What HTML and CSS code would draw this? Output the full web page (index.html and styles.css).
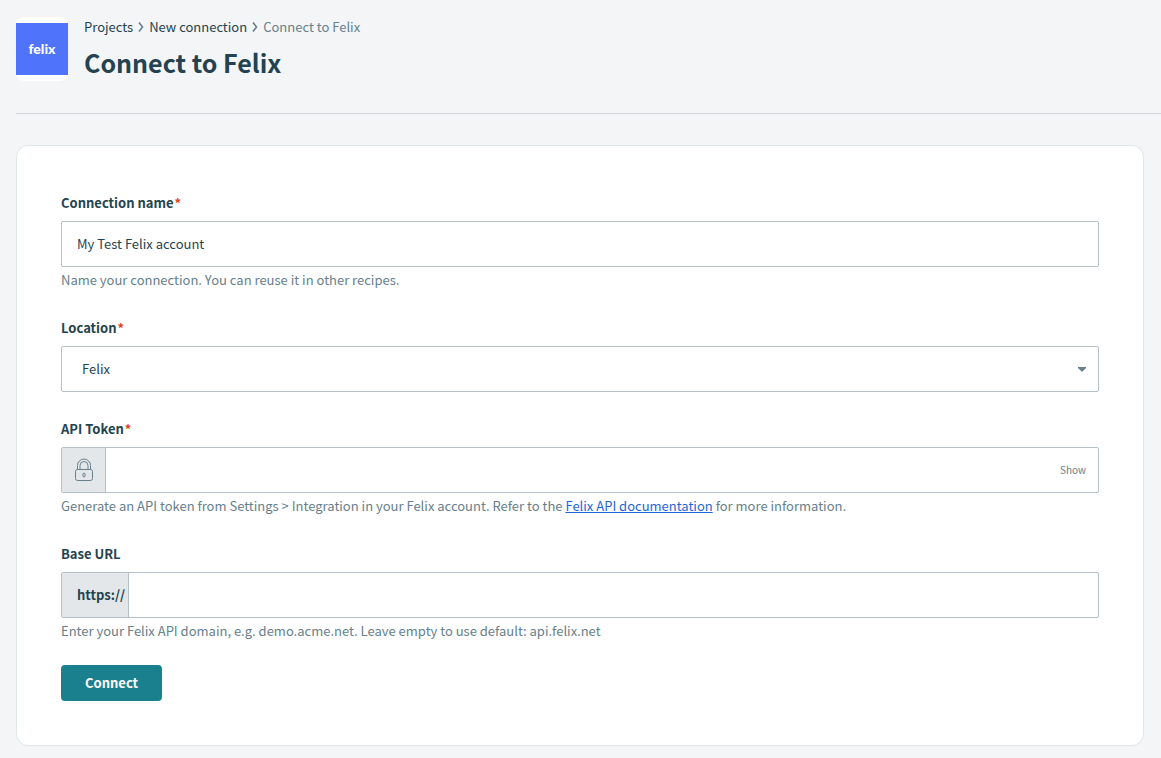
FILE: index.html
```
<!DOCTYPE html>
<html lang="en">
<head>
<meta charset="utf-8">
<meta name="viewport" content="width=device-width, initial-scale=1">
<title>Connect to Felix</title>
<link rel="stylesheet" href="styles.css">
</head>
<body>
<header class="page-header">
  <div class="app-logo"><span class="app-logo-mark">felix</span></div>
  <div class="page-heading">
    <nav class="breadcrumbs" aria-label="Breadcrumb">
      <a class="crumb" href="#projects">Projects</a>
      <svg class="crumb-arrow" viewBox="0 0 6 10" aria-hidden="true"><path d="M1 .5 4.500 5 1 9.500"/></svg>
      <a class="crumb" href="#new">New connection</a>
      <svg class="crumb-arrow" viewBox="0 0 6 10" aria-hidden="true"><path d="M1 .5 4.500 5 1 9.500"/></svg>
      <span class="crumb crumb-current" aria-current="page">Connect to Felix</span>
    </nav>
    <h1 class="page-title">Connect to Felix</h1>
  </div>
</header>
<main class="card">
  <form class="form">
    <div class="field">
      <label class="label" for="name">Connection name<span class="required">*</span></label>
      <div class="control"><input class="input" id="name" type="text" value="My Test Felix account"></div>
      <p class="hint">Name your connection. You can reuse it in other recipes.</p>
    </div>
    <div class="field">
      <label class="label" for="location">Location<span class="required">*</span></label>
      <div class="control">
        <select class="input select" id="location"><option>Felix</option></select>
        <svg class="caret" viewBox="0 0 8 5" aria-hidden="true"><path d="M0 0h8v1L4.500 4.500h-1L0 1z"/></svg>
      </div>
    </div>
    <div class="field">
      <label class="label" for="token">API Token<span class="required">*</span></label>
      <div class="control">
        <span class="addon addon-icon">
          <svg class="lock" viewBox="0 0 20 24" aria-hidden="true">
            <path d="M3.500 11V7.500a6.500 6.500 0 0 1 13 0V11M6 11V7.500a4 4 0 0 1 8 0V11"/>
            <rect x="1.500" y="11.500" width="17" height="11" rx="2"/>
            <ellipse cx="10" cy="17" rx="1.200" ry="2"/>
          </svg>
        </span>
        <input class="input" id="token" type="password">
        <button class="show" type="button">Show</button>
      </div>
      <p class="hint">Generate an API token from Settings &gt; Integration in your Felix account. Refer to the <a class="link" href="#docs">Felix API documentation</a> for more information.</p>
    </div>
    <div class="field">
      <label class="label" for="url">Base URL</label>
      <div class="control">
        <span class="addon addon-text">https://</span>
        <input class="input" id="url" type="text">
      </div>
      <p class="hint">Enter your Felix API domain, e.g. demo.acme.net. Leave empty to use default: api.felix.net</p>
    </div>
    <button class="submit" type="submit">Connect</button>
  </form>
</main>
</body>
</html>
```
FILE: styles.css
```
* { box-sizing: border-box; }

body {
  margin: 0;
  background: #f3f5f7;
  color: #24434f;
  font: 13px/20px "Source Sans Pro", "Noto Sans CJK SC", sans-serif;
}

.page-header {
  display: flex;
  gap: 16px;
  margin-left: 16px;
  padding: 17px 0 32px;
  border-bottom: 1px solid #cdd3d6;
}

.app-logo {
  display: flex;
  align-items: center;
  width: 52px;
  height: 64px;
  border-radius: 8px;
  background: #fff;
}

.app-logo-mark {
  width: 52px;
  height: 52px;
  background: #5073fb;
  color: #fff;
  font: 900 14px/52px Lato, sans-serif;
  text-align: center;
}

.breadcrumbs { display: flex; align-items: center; gap: 5px; }
.crumb { color: #24434f; text-decoration: none; }
.crumb-current { color: #67808b; }
.crumb-arrow { width: 6px; height: 10px; fill: none; stroke: #67808b; stroke-width: 1.600; }

.page-title { margin: 7px 0 0; font-size: 25px; line-height: 36px; font-weight: 700; }

.card {
  margin: 31px 17px 12px 16px;
  padding: 47px 44px 44px;
  border: 1px solid #e1e6e9;
  border-radius: 12px;
  background: #fff;
}

.form { display: flex; flex-direction: column; align-items: stretch; }
.field { margin-bottom: 27px; }
.field:last-of-type { margin-bottom: 24px; }
.label { display: block; margin-bottom: 8px; font-weight: 700; }
.required { margin-left: 1px; color: #e0412a; }

.control {
  position: relative;
  display: flex;
  align-items: stretch;
  height: 46px;
  border: 1px solid #b5c0c7;
  border-radius: 2px;
  background: #fff;
}

.control:focus-within { border-color: #1b808e; }

.input {
  flex: 1;
  min-width: 0;
  padding: 0 15px;
  border: 0;
  outline: 0;
  background: transparent;
  color: inherit;
  font: inherit;
}

.select { padding: 0 32px 0 20px; appearance: none; }
.caret { position: absolute; top: 20px; right: 12px; width: 8px; height: 5px; fill: #67808b; pointer-events: none; }

.addon { display: flex; align-items: center; border-right: 1px solid #b5c0c7; background: #e3e7ea; }
.addon-icon { justify-content: center; width: 44px; }
.addon-text { padding: 0 3px 0 15px; font-weight: 700; }
.lock { width: 20px; height: 24px; fill: none; stroke: #67808b; stroke-width: 1; }

.show { padding: 0 12px; border: 0; background: none; color: #67808b; font: inherit; font-size: 10px; cursor: pointer; }

.hint { margin: 3px 0 0; padding-bottom: 1px; color: #67808b; }
.field:last-of-type .hint { padding-bottom: 0; }
.link { color: #1d67d8; }

.submit {
  align-self: flex-start;
  height: 36px;
  padding: 0 24px;
  border: 0;
  border-radius: 4px;
  background: #1b808e;
  color: #fff;
  font: inherit;
  font-weight: 700;
  cursor: pointer;
}
```
